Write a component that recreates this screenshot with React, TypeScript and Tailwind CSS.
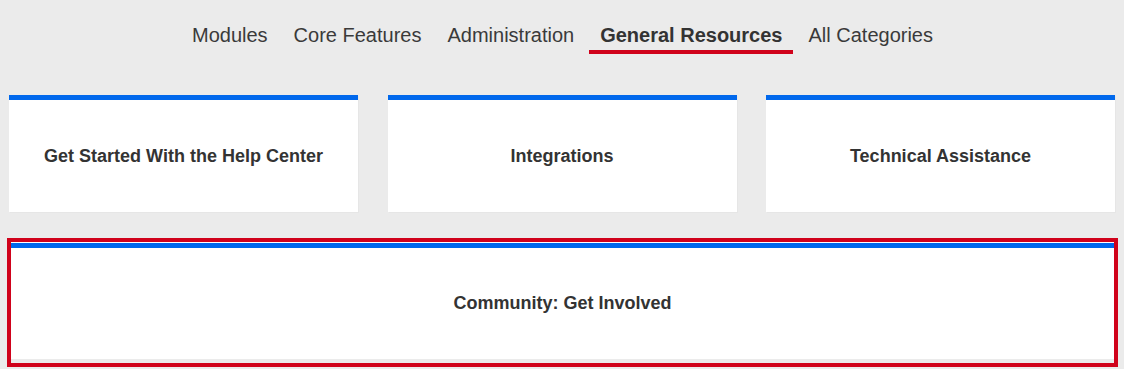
const tabs = ["Modules", "Core Features", "Administration", "General Resources", "All Categories"];
const active = "General Resources";

const cards = ["Get Started With the Help Center", "Integrations", "Technical Assistance"];

function Card({ title, className = "" }: { title: string; className?: string }) {
  return (
    <div className={`flex flex-col bg-white shadow-[1px_1px_0_#e6e6e6] ${className}`}>
      <div className="h-[5px] bg-[#0068ec]" />
      <div className="flex flex-1 items-center justify-center pt-[1px] text-[18px] font-bold text-[#333]">{title}</div>
    </div>
  );
}

export default function App() {
  return (
    <div className="min-h-[369px] bg-[#ebebeb] font-['Liberation_Sans',Arial,sans-serif]">
      <nav className="flex justify-center gap-[4px] pt-[23px] pl-[1px]">
        {tabs.map((t) => (
          <a
            key={t}
            href="#"
            className={`px-[11px] pb-[3px] text-[20px] leading-[24px] border-b-4 ${
              t === active ? "border-[#d0021b] font-bold text-[#333]" : "border-transparent text-[#3a3a3a]"
            }`}
          >
            {t}
          </a>
        ))}
      </nav>

      <div className="mt-[41px] grid grid-cols-3 gap-[29.5px] px-[9px]">
        {cards.map((c) => (
          <Card key={c} title={c} className="h-[117px]" />
        ))}
      </div>

      <div className="mx-[7px] mt-[26px] mr-[6px] border-4 border-[#d0021b] pb-[4px]">
        <div className="flex h-[117px] flex-col bg-white pt-[1px]">
          <div className="h-[5px] bg-[#0068ec]" />
          <div className="flex flex-1 items-center justify-center text-[18px] font-bold text-[#333]">
            Community: Get Involved
          </div>
        </div>
      </div>
    </div>
  );
}
